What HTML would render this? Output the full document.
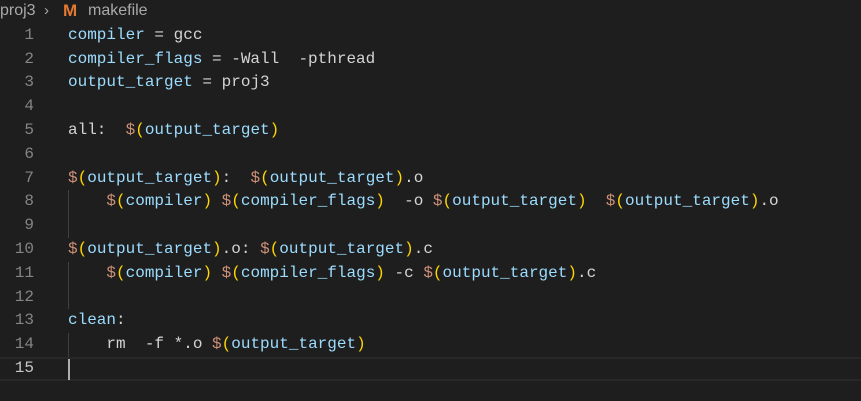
<!DOCTYPE html>
<html><head><meta charset="utf-8"><style>
html,body{margin:0;padding:0;background:#1e1e1e;width:861px;height:401px;overflow:hidden}
.bc{position:absolute;top:0;height:22px;line-height:22px;font-family:"Liberation Sans",sans-serif;font-size:16px;color:#a9a9a9;white-space:pre}
.m{color:#e37933;font-weight:bold;font-size:17px}
.ed{position:absolute;left:0;top:23.8px;width:861px;font-family:"Liberation Mono",monospace;font-size:16px}
.ln{position:relative;height:23.8px;line-height:23.8px;white-space:pre}
.n{position:absolute;right:827px;color:#858585;text-align:right}
.c{position:absolute;left:68px;color:#d4d4d4}
.v{color:#9cdcfe}.d{color:#ce9178}.p{color:#ffd700}
.g{position:absolute;left:68px;top:0;width:1px;height:23.8px;background:#404040}
.cur{border-top:2px solid #282828;border-bottom:2px solid #282828;box-sizing:border-box}
.cur .n{color:#c6c6c6}
.caret{position:absolute;left:68px;top:0;width:2px;height:21px;background:#aeafad}
</style></head><body>
<div class="bc" style="left:0">proj3</div>
<div class="bc" style="left:44px;font-size:15px">›</div>
<div class="bc m" style="left:63px">M</div>
<div class="bc" style="left:88px">makefile</div>
<div class="ed">
<div class="ln"><span class="n">1</span><span class="c"><span class="v">compiler</span> = gcc</span></div>
<div class="ln"><span class="n">2</span><span class="c"><span class="v">compiler_flags</span> = -Wall  -pthread</span></div>
<div class="ln"><span class="n">3</span><span class="c"><span class="v">output_target</span> = proj3</span></div>
<div class="ln"><span class="n">4</span></div>
<div class="ln"><span class="n">5</span><span class="c">all:  <span class="d">$</span><span class="p">(</span><span class="v">output_target</span><span class="p">)</span></span></div>
<div class="ln"><span class="n">6</span></div>
<div class="ln"><span class="n">7</span><span class="c"><span class="d">$</span><span class="p">(</span><span class="v">output_target</span><span class="p">)</span>:  <span class="d">$</span><span class="p">(</span><span class="v">output_target</span><span class="p">)</span>.o</span></div>
<div class="ln"><span class="g"></span><span class="n">8</span><span class="c">    <span class="d">$</span><span class="p">(</span><span class="v">compiler</span><span class="p">)</span> <span class="d">$</span><span class="p">(</span><span class="v">compiler_flags</span><span class="p">)</span>  -o <span class="d">$</span><span class="p">(</span><span class="v">output_target</span><span class="p">)</span>  <span class="d">$</span><span class="p">(</span><span class="v">output_target</span><span class="p">)</span>.o</span></div>
<div class="ln"><span class="g"></span><span class="n">9</span></div>
<div class="ln"><span class="n">10</span><span class="c"><span class="d">$</span><span class="p">(</span><span class="v">output_target</span><span class="p">)</span>.o: <span class="d">$</span><span class="p">(</span><span class="v">output_target</span><span class="p">)</span>.c</span></div>
<div class="ln"><span class="g"></span><span class="n">11</span><span class="c">    <span class="d">$</span><span class="p">(</span><span class="v">compiler</span><span class="p">)</span> <span class="d">$</span><span class="p">(</span><span class="v">compiler_flags</span><span class="p">)</span> -c <span class="d">$</span><span class="p">(</span><span class="v">output_target</span><span class="p">)</span>.c</span></div>
<div class="ln"><span class="g"></span><span class="n">12</span></div>
<div class="ln"><span class="n">13</span><span class="c"><span class="v">clean</span>:</span></div>
<div class="ln"><span class="g"></span><span class="n">14</span><span class="c">    rm  -f *.o <span class="d">$</span><span class="p">(</span><span class="v">output_target</span><span class="p">)</span></span></div>
<div class="ln cur"><span class="caret"></span><span class="n" style="line-height:19.8px">15</span></div>
</div>
</body></html>
